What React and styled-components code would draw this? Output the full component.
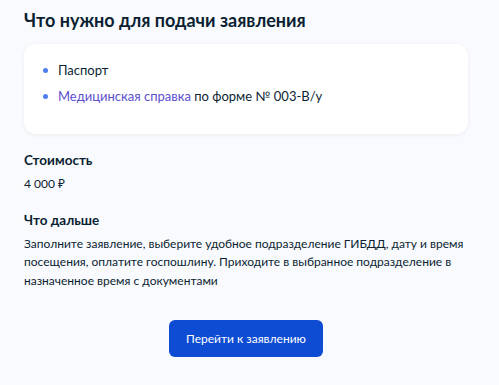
import React from "react";
import styled, { createGlobalStyle } from "styled-components";

const GlobalStyle = createGlobalStyle`
  html, body {
    margin: 0;
    padding: 0;
    background: #f9fafd;
  }
  body {
    font-family: Lato, "Noto Sans", sans-serif;
    color: #0b1f33;
  }
`;

const documents = [
  { link: "Медицинская справка", text: " по форме № 003-В/у" },
];

const App = () => {
  return (
    <>
      <GlobalStyle />
      <Page>
        <Title>Что нужно для подачи заявления</Title>
        <Card>
          <List>
            <Item>Паспорт</Item>
            {documents.map((d) => (
              <Item key={d.link}>
                <Link href="#">{d.link}</Link>
                {d.text}
              </Item>
            ))}
          </List>
        </Card>
        <Section>
          <SubTitle>Стоимость</SubTitle>
          <Text>4 000 ₽</Text>
        </Section>
        <Section>
          <SubTitle>Что дальше</SubTitle>
          <Text>
            Заполните заявление, выберите удобное подразделение ГИБДД, дату и время
            посещения, оплатите госпошлину. Приходите в выбранное подразделение в
            назначенное время с документами
          </Text>
        </Section>
        <Actions>
          <Button>Перейти к заявлению</Button>
        </Actions>
      </Page>
    </>
  );
};

export default App;

const Page = styled.div`
  width: 499px;
  height: 385px;
  box-sizing: border-box;
  padding: 8px 31px 0 24px;
  display: flex;
  flex-direction: column;
  overflow: hidden;
`;

const Title = styled.h1`
  margin: 0;
  font-size: 18px;
  line-height: 24px;
  font-weight: 700;
  color: #0b1f33;
`;

const Card = styled.div`
  margin-top: 12px;
  width: 444px;
  background: #fff;
  border-radius: 12px;
  box-shadow: 0 1px 4px rgba(11, 31, 51, 0.06);
  padding: 18px 0 30px 0;
  box-sizing: border-box;
`;

const List = styled.ul`
  list-style: none;
  margin: 0;
  padding: 0 0 0 34px;
  display: flex;
  flex-direction: column;
  gap: 10px;
`;

const Item = styled.li`
  position: relative;
  font-size: 13px;
  line-height: 16px;
  color: #0b1f33;
  &::before {
    content: "";
    position: absolute;
    left: -15px;
    top: 6px;
    width: 5px;
    height: 5px;
    border-radius: 50%;
    background: #4d7ef0;
  }
`;

const Link = styled.a`
  color: #5b4fcf;
  text-decoration: none;
`;

const Section = styled.div`
  margin-top: 16px;
  display: flex;
  flex-direction: column;
  gap: 5px;
  & + & {
    margin-top: 16px;
  }
`;

const SubTitle = styled.h2`
  margin: 0;
  font-size: 13.5px;
  line-height: 20px;
  font-weight: 700;
  color: #0b1f33;
`;

const Text = styled.p`
  margin: 0;
  font-size: 12px;
  line-height: 18.5px;
  color: #0b1f33;
`;

const Actions = styled.div`
  display: flex;
  justify-content: center;
  margin-top: 30px;
`;

const Button = styled.button`
  width: 154px;
  height: 37px;
  border: none;
  border-radius: 6px;
  background: #0d4cd3;
  color: #fff;
  font-family: Lato, "Noto Sans", sans-serif;
  font-size: 12px;
  cursor: pointer;
`;
